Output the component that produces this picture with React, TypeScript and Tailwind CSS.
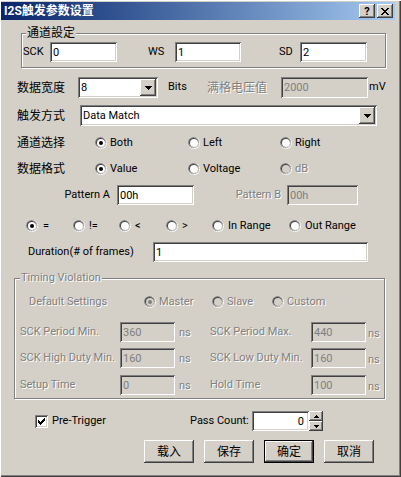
import type { ReactNode } from "react";

const sunken =
  "shadow-[inset_1px_1px_#808080,inset_-1px_-1px_#ffffff,inset_2px_2px_#404040,inset_-2px_-2px_#d4d0c8]";
const raised =
  "shadow-[inset_-1px_-1px_#404040,inset_1px_1px_#ffffff,inset_-2px_-2px_#808080,inset_2px_2px_#d4d0c8]";
const grayText = "text-[#808080] [text-shadow:1px_1px_0_#ffffff]";

function Edit({
  className = "",
  value,
  disabled,
  right,
}: {
  className?: string;
  value: string;
  disabled?: boolean;
  right?: boolean;
}) {
  return (
    <div
      className={`${className} ${sunken} flex shrink-0 items-center leading-none ${
        right ? "justify-end pr-[5px]" : "pl-[3px]"
      } ${disabled ? "bg-[#d4d0c8] text-[#808080]" : "bg-white text-black"}`}
    >
      {value}
    </div>
  );
}

function DownArrow() {
  return (
    <svg width="7" height="4" viewBox="0 0 7 4" shapeRendering="crispEdges">
      <path d="M0 0h7v1h-1v1h-1v1h-1v1h-1v-1h-1v-1h-1v-1h-1z" fill="#000" />
    </svg>
  );
}

function Combo({ className = "", value }: { className?: string; value: string }) {
  return (
    <div className={`${className} ${sunken} flex shrink-0 items-stretch bg-white p-[2px]`}>
      <span className="flex flex-1 items-center pl-[1px] leading-none">{value}</span>
      <div className={`flex w-[16px] items-center justify-center bg-[#d4d0c8] ${raised}`}>
        <DownArrow />
      </div>
    </div>
  );
}

function Radio({ checked, disabled }: { checked?: boolean; disabled?: boolean }) {
  return (
    <svg width="12" height="12" viewBox="0 0 12 12" className="shrink-0">
      <circle cx="6" cy="6" r="6" fill="#ffffff" />
      <circle cx="5.6" cy="5.6" r="5.6" fill="#808080" />
      <circle cx="6" cy="6" r="5" fill="#d4d0c8" />
      <circle cx="5.6" cy="5.6" r="4.6" fill="#404040" />
      <circle cx="6" cy="6" r="4" fill={disabled ? "#d4d0c8" : "#ffffff"} />
      {checked && <circle cx="6" cy="6" r="2" fill={disabled ? "#808080" : "#000000"} />}
    </svg>
  );
}

function RadioItem({
  label,
  checked,
  disabled,
  className = "",
  gap = "gap-[3px]",
}: {
  label: string;
  checked?: boolean;
  disabled?: boolean;
  className?: string;
  gap?: string;
}) {
  return (
    <div className={`flex shrink-0 items-center ${gap} ${className}`}>
      <Radio checked={checked} disabled={disabled} />
      <span className={`whitespace-nowrap ${disabled ? grayText : ""}`}>{label}</span>
    </div>
  );
}

function Group({
  title,
  className = "",
  legend = "",
  children,
}: {
  title: string;
  className?: string;
  legend?: string;
  children: ReactNode;
}) {
  return (
    <div
      className={`relative shrink-0 border border-[#808080] shadow-[1px_1px_0_#ffffff,inset_1px_1px_0_#ffffff] ${className}`}
    >
      <span className={`absolute top-[-8px] whitespace-nowrap bg-[#d4d0c8] px-[1px] leading-[14px] ${legend}`}>
        {title}
      </span>
      {children}
    </div>
  );
}

const CHECK = [
  [6],
  [5, 6],
  [0, 4, 5, 6],
  [0, 1, 3, 4, 5],
  [0, 1, 2, 3, 4],
  [1, 2, 3],
  [2],
];

function Checkbox() {
  return (
    <div className={`h-[13px] w-[13px] shrink-0 bg-white ${sunken}`}>
      <svg width="13" height="13" viewBox="0 0 13 13" shapeRendering="crispEdges">
        {CHECK.map((row, y) =>
          row.map((x) => <rect key={`${x}-${y}`} x={x + 3} y={y + 3} width="1" height="1" fill="#000" />)
        )}
      </svg>
    </div>
  );
}

const CROSS = [
  [0, 1, 6, 7],
  [1, 2, 5, 6],
  [2, 3, 4, 5],
  [3, 4],
  [2, 3, 4, 5],
  [1, 2, 5, 6],
  [0, 1, 6, 7],
];

function Spinner() {
  return (
    <div className="flex h-[20px] w-[14px] shrink-0 flex-col">
      <div className={`flex h-[10px] items-center justify-center bg-[#d4d0c8] ${raised}`}>
        <svg width="5" height="3" viewBox="0 0 5 3" shapeRendering="crispEdges">
          <path d="M2 0h1v1h1v1h1v1h-5v-1h1v-1h1z" fill="#000" />
        </svg>
      </div>
      <div className={`flex h-[10px] items-center justify-center bg-[#d4d0c8] ${raised}`}>
        <svg width="5" height="3" viewBox="0 0 5 3" shapeRendering="crispEdges">
          <path d="M0 0h5v1h-1v1h-1v1h-1v-1h-1v-1h-1z" fill="#000" />
        </svg>
      </div>
    </div>
  );
}

function Button({ label, primary }: { label: string; primary?: boolean }) {
  return (
    <div
      className={`flex h-[23px] w-[50px] items-center justify-center bg-[#d4d0c8] text-[12px] ${
        primary
          ? "shadow-[inset_0_0_0_1px_#000000,inset_-2px_-2px_#404040,inset_2px_2px_#ffffff,inset_-3px_-3px_#808080]"
          : raised
      }`}
    >
      {label}
    </div>
  );
}

function TitleBar() {
  return (
    <div className="ml-[1px] mt-[2px] flex h-[18px] w-[394px] shrink-0 items-center bg-gradient-to-r from-[#0a246a] to-[#a6caf0] pl-[3px] pr-[2px]">
      <span className="text-[12px] font-bold leading-none text-white">I2S触发参数设置</span>
      <div className="ml-auto flex gap-[2px]">
        <div className={`flex h-[14px] w-[16px] items-center justify-center bg-[#d4d0c8] ${raised}`}>
          <span className="text-[11px] font-bold leading-none">?</span>
        </div>
        <div className={`flex h-[14px] w-[16px] items-center justify-center bg-[#d4d0c8] ${raised}`}>
          <svg width="8" height="7" viewBox="0 0 8 7" shapeRendering="crispEdges">
            {CROSS.map((row, y) =>
              row.map((x) => <rect key={`${x}-${y}`} x={x} y={y} width="1" height="1" fill="#000" />)
            )}
          </svg>
        </div>
      </div>
    </div>
  );
}

const TIMING_ROWS = [
  { l1: "SCK Period Min.", v1: "360", l2: "SCK Period Max.", v2: "440", mt: "mt-[12px]" },
  { l1: "SCK High Duty Min.", v1: "160", l2: "SCK Low Duty Min.", v2: "160", mt: "mt-[6px]" },
  { l1: "Setup Time", v1: "0", l2: "Hold Time", v2: "100", mt: "mt-[7px]" },
];

export default function App() {
  return (
    <div className="flex h-[477px] w-[401px] flex-col overflow-hidden bg-[#d4d0c8] text-[11px] text-black shadow-[inset_1px_1px_#ffffff,inset_-1px_-1px_#404040,inset_-2px_-2px_#808080] [font-family:Roboto,'Noto_Sans_CJK_SC',sans-serif]">
      <TitleBar />

      {/* 通道設定 */}
      <Group title="通道設定" className="ml-[21px] mt-[13px] w-[365px] pb-[5px]" legend="left-[4px] text-[12px]">
        <div className="mt-[8px] flex h-[20px] items-center">
          <span className="w-[28px] shrink-0 pl-[1px]">SCK</span>
          <Edit className="h-[20px] w-[67px]" value="0" />
          <span className="ml-[31px] w-[27px] shrink-0">WS</span>
          <Edit className="h-[20px] w-[66px]" value="1" />
          <span className="ml-[38px] w-[21px] shrink-0">SD</span>
          <Edit className="h-[20px] w-[67px]" value="2" />
        </div>
      </Group>

      {/* 数据宽度 */}
      <div className="mt-[9px] flex h-[21px] shrink-0 items-center">
        <span className="ml-[17px] w-[61px] shrink-0 text-[12px]">数据宽度</span>
        <Combo className="h-[21px] w-[80px]" value="8" />
        <span className="ml-[10px] w-[39px] shrink-0">Bits</span>
        <span className={`w-[74px] shrink-0 text-[12px] ${grayText}`}>满格电压值</span>
        <Edit className="h-[21px] w-[87px]" value="2000" disabled />
        <span className="ml-[1px]">mV</span>
      </div>

      {/* 触发方式 */}
      <div className="mt-[7px] flex h-[21px] shrink-0 items-center">
        <span className="ml-[17px] w-[63px] shrink-0 text-[12px]">触发方式</span>
        <Combo className="h-[21px] w-[297px]" value="Data Match" />
      </div>

      {/* 通道选择 */}
      <div className="mt-[9px] flex h-[16px] shrink-0 items-center">
        <span className="ml-[17px] w-[78px] shrink-0 text-[12px]">通道选择</span>
        <RadioItem className="w-[93px]" label="Both" checked />
        <RadioItem className="w-[92px]" label="Left" />
        <RadioItem label="Right" />
      </div>

      {/* 数据格式 */}
      <div className="mt-[10px] flex h-[16px] shrink-0 items-center">
        <span className="ml-[17px] w-[78px] shrink-0 text-[12px]">数据格式</span>
        <RadioItem className="w-[93px]" label="Value" checked />
        <RadioItem className="w-[92px]" label="Voltage" />
        <RadioItem label="dB" disabled />
      </div>

      {/* Pattern */}
      <div className="mt-[8px] flex h-[20px] shrink-0 items-center">
        <span className="ml-[17px] mr-[7px] w-[93px] shrink-0 text-right">Pattern A</span>
        <Edit className="h-[20px] w-[77px]" value="00h" />
        <span className={`mr-[6px] w-[87px] shrink-0 text-right ${grayText}`}>Pattern B</span>
        <Edit className="h-[20px] w-[71px]" value="00h" disabled />
      </div>

      {/* Compare */}
      <div className="mt-[13px] flex h-[16px] shrink-0 items-center pl-[26px]">
        <RadioItem className="w-[47px]" gap="gap-[5px]" label="=" checked />
        <RadioItem className="w-[46px]" gap="gap-[4px]" label="!=" />
        <RadioItem className="w-[47px]" gap="gap-[4px]" label="<" />
        <RadioItem className="w-[46px]" gap="gap-[4px]" label=">" />
        <RadioItem className="w-[77px]" gap="gap-[4px]" label="In Range" />
        <RadioItem gap="gap-[4px]" label="Out Range" />
      </div>

      {/* Duration */}
      <div className="mt-[8px] flex h-[20px] shrink-0 items-center">
        <span className="ml-[28px] w-[125px] shrink-0 whitespace-nowrap">Duration(# of frames)</span>
        <Edit className="h-[20px] w-[215px]" value="1" />
      </div>

      {/* Timing Violation */}
      <Group
        title="Timing Violation"
        className={`ml-[14px] mt-[16px] w-[371px] pb-[3px] ${grayText}`}
        legend="left-[5px]"
      >
        <div className="mt-[15px] flex h-[16px] items-center">
          <span className="ml-[14px] w-[115px] shrink-0">Default Settings</span>
          <RadioItem className="w-[68px]" label="Master" checked disabled />
          <RadioItem className="w-[60px]" label="Slave" disabled />
          <RadioItem label="Custom" disabled />
        </div>
        {TIMING_ROWS.map((r) => (
          <div key={r.l1} className={`flex h-[20px] items-center ${r.mt}`}>
            <span className="ml-[5px] w-[100px] shrink-0 whitespace-nowrap">{r.l1}</span>
            <Edit className="h-[20px] w-[55px] [text-shadow:none]" value={r.v1} disabled />
            <span className="ml-[4px] w-[31px] shrink-0 pt-[2px]">ns</span>
            <span className="w-[101px] shrink-0 whitespace-nowrap">{r.l2}</span>
            <Edit className="h-[20px] w-[55px] [text-shadow:none]" value={r.v2} disabled />
            <span className="ml-[2px] pt-[4px]">ns</span>
          </div>
        ))}
      </Group>

      {/* Pre-trigger / pass count */}
      <div className="mt-[12px] flex h-[20px] shrink-0 items-center">
        <div className="ml-[35px]">
          <Checkbox />
        </div>
        <span className="ml-[4px] w-[138px] shrink-0">Pre-Trigger</span>
        <span className="w-[62px] shrink-0 whitespace-nowrap pr-[4px] text-right">Pass Count:</span>
        <Edit className="h-[20px] w-[57px]" value="0" right />
        <Spinner />
      </div>

      {/* Buttons */}
      <div className="ml-[144px] mt-[9px] flex shrink-0 gap-[10px]">
        <Button label="载入" />
        <Button label="保存" />
        <Button label="确定" primary />
        <Button label="取消" />
      </div>
    </div>
  );
}
